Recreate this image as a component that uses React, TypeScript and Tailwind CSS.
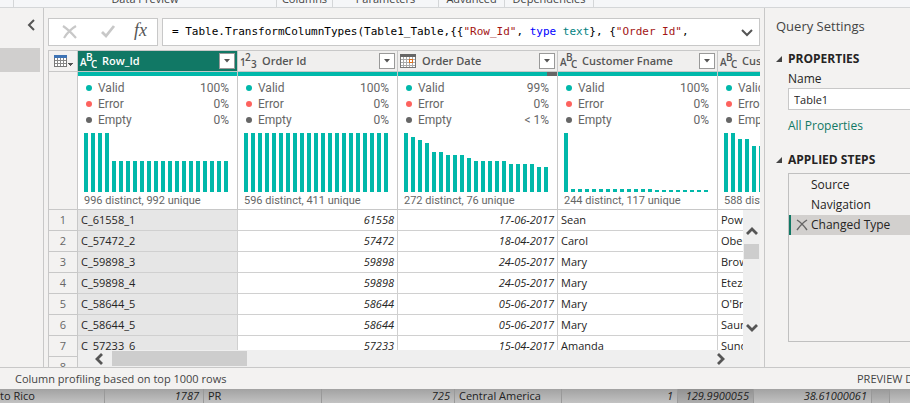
import React from "react";

type Kind = "text" | "number" | "date";

interface Column {
  name: string;
  kind: Kind;
  selected?: boolean;
  stats: [string, string, string];
  emptyTail?: boolean;
  bars: number[];
  summary: string;
  cells: string[];
}

const fill = (height: number, count: number): number[] => Array(count).fill(height);

const columns: Column[] = [
  {
    name: "Row_Id",
    kind: "text",
    selected: true,
    stats: ["100%", "0%", "0%"],
    bars: [...fill(59, 4), ...fill(31, 17)],
    summary: "996 distinct, 992 unique",
    cells: ["C_61558_1", "C_57472_2", "C_59898_3", "C_59898_4", "C_58644_5", "C_58644_5", "C_57233_6", ""],
  },
  {
    name: "Order Id",
    kind: "number",
    stats: ["100%", "0%", "0%"],
    bars: fill(59, 21),
    summary: "596 distinct, 411 unique",
    cells: ["61558", "57472", "59898", "59898", "58644", "58644", "57233", ""],
  },
  {
    name: "Order Date",
    kind: "date",
    stats: ["99%", "0%", "< 1%"],
    emptyTail: true,
    bars: [59, 55, 52, 49, 40, 40, 37, 37, 37, 34, ...fill(31, 5), ...fill(28, 4), 25, 25],
    summary: "272 distinct, 76 unique",
    cells: ["17-06-2017", "18-04-2017", "24-05-2017", "24-05-2017", "05-06-2017", "05-06-2017", "15-04-2017", ""],
  },
  {
    name: "Customer Fname",
    kind: "text",
    stats: ["100%", "0%", "0%"],
    bars: [59, ...fill(3, 12), ...fill(2, 8)],
    summary: "244 distinct, 117 unique",
    cells: ["Sean", "Carol", "Mary", "Mary", "Mary", "Mary", "Amanda", ""],
  },
  {
    name: "Customer",
    kind: "text",
    stats: ["100%", "0%", "0%"],
    bars: [59, 59, 53, 53, 46, 46, 40, 40, 37],
    summary: "588 distinct",
    cells: ["Powell", "Oberoi", "Brown", "Etezadi", "O'Brien", "Saunders", "Sundar", ""],
  },
];

const statKinds = [
  { label: "Valid", dot: "bg-[#01b8aa]" },
  { label: "Error", dot: "bg-[#fd625e]" },
  { label: "Empty", dot: "bg-[#666666]" },
];

function KindIcon({ kind }: { kind: Kind }) {
  if (kind === "date") {
    return (
      <svg width="18" height="16" viewBox="0 0 18 16" aria-hidden="true" className="shrink-0" shapeRendering="crispEdges">
        <rect x="1.5" y="1.5" width="15" height="13" fill="#fff" stroke="#777" />
        <rect x="1" y="1" width="16" height="3" fill="#666" />
        <path d="M4.5 4v10M7.5 4v10M10.5 4v10M13.5 4v10M2 6.5h14M2 9.5h14M2 12.5h14" stroke="#aaa" />
        <rect x="10.5" y="6.5" width="3" height="3" fill="#fff" stroke="#e0701a" />
      </svg>
    );
  }
  const [a, b, c] = kind === "text" ? ["A", "B", "C"] : ["1", "2", "3"];
  return (
    <svg
      width="18"
      height="20"
      viewBox="0 0 18 20"
      aria-hidden="true"
      className="shrink-0 font-['Open_Sans',sans-serif] text-[10px] font-semibold"
      fill="currentColor"
    >
      <text x={kind === "text" ? 1 : 1} y="15">{a}</text>
      <text x={kind === "text" ? 7 : 6} y="10">{b}</text>
      <text x={kind === "text" ? 12 : 12} y="17">{c}</text>
    </svg>
  );
}

function Chevron({ path, className }: { path: string; className?: string }) {
  return (
    <svg width="14" height="14" viewBox="0 0 14 14" fill="none" stroke="#555" strokeWidth="2.8" className={className} aria-hidden="true">
      <path d={path} />
    </svg>
  );
}

function ColumnHeader({ column }: { column: Column }) {
  return (
    <th
      scope="col"
      className={
        "h-[21px] border-r border-b border-[#c8c8c8] p-0 font-semibold " +
        (column.selected ? "bg-[#117865] text-white" : "bg-[#f0efee] text-[#555]")
      }
    >
      <div className="flex h-5 items-center pl-px pr-[2px]">
        <KindIcon kind={column.kind} />
        <span className="flex-1 pl-[5px] text-left whitespace-nowrap">{column.name}</span>
        <button
          type="button"
          aria-label={`Filter ${column.name}`}
          className="flex size-4 shrink-0 items-center justify-center border border-[#999] bg-white"
        >
          <svg width="6" height="4" viewBox="0 0 6 4" aria-hidden="true">
            <path d="M0 0h6L3 3.4z" fill="#555" />
          </svg>
        </button>
      </div>
    </th>
  );
}

function ColumnProfile({ column }: { column: Column }) {
  return (
    <td className="h-[138px] border-r border-b border-[#c8c8c8] bg-white p-0 align-top font-['Roboto',sans-serif] text-[#666]">
      <div className="flex h-1 bg-[#01b8aa]">
        {column.emptyTail && <div className="ml-auto w-[10px] bg-[#666]" />}
      </div>
      <div className="pt-1 pb-[5px] text-[12px] leading-4">
        {statKinds.map((stat, i) => (
          <div key={stat.label} className="flex items-center px-2">
            <span className={"mr-[6px] size-[6px] rounded-full " + stat.dot} />
            <span className="flex-1">{stat.label}</span>
            <span>{column.stats[i]}</span>
          </div>
        ))}
      </div>
      <div className="flex h-[59px] items-end gap-[3px] pl-[6px]">
        {column.bars.map((height, i) => (
          <div key={i} className="w-1 bg-[#01b8aa]" style={{ height }} />
        ))}
      </div>
      <div className="pt-px pl-[6px] text-[11px] leading-4 whitespace-nowrap">{column.summary}</div>
    </td>
  );
}

function DataGrid() {
  return (
    <div className="relative min-h-0 flex-1 overflow-hidden border-t border-l border-[#c8c8c8] bg-white">
      <table className="w-[829px] table-fixed border-separate border-spacing-0 text-[11px] leading-5 text-[#252423]">
        <colgroup>
          <col className="w-[29px]" />
          {columns.map((column) => (
            <col key={column.name} className="w-[160px]" />
          ))}
        </colgroup>
        <thead>
          <tr>
            <th className="h-[21px] border-r border-b border-[#c8c8c8] bg-[#f3f2f1] p-0">
              <button type="button" aria-label="Table options" className="flex h-5 items-center pl-[5px]">
                <svg width="20" height="14" viewBox="0 0 20 14" aria-hidden="true" shapeRendering="crispEdges">
                  <rect x="0.5" y="1.5" width="12" height="11" fill="#fff" stroke="#777" />
                  <rect x="0" y="1" width="13" height="3" fill="#3f74b5" />
                  <path d="M3.5 4v8M6.5 4v8M9.5 4v8M1 6.5h11M1 9.5h11" stroke="#888" />
                  <path d="M14 9h5l-2.5 3z" fill="#555" />
                </svg>
              </button>
            </th>
            {columns.map((column) => (
              <ColumnHeader key={column.name} column={column} />
            ))}
          </tr>
        </thead>
        <tbody>
          <tr>
            <td className="border-r border-b border-[#c8c8c8] bg-[#f3f2f1] p-0" />
            {columns.map((column) => (
              <ColumnProfile key={column.name} column={column} />
            ))}
          </tr>
          {columns[0].cells.map((_, row) => (
            <tr key={row}>
              <th scope="row" className="h-[21px] border-r border-b border-[#c8c8c8] bg-[#f3f2f1] p-0 text-center font-normal text-[#666]">
                {row + 1}
              </th>
              {columns.map((column) => (
                <td
                  key={column.name}
                  className={
                    "h-[21px] overflow-hidden border-r border-b border-[#d0d0d0] px-[3px] py-0 whitespace-nowrap " +
                    (column.selected ? "bg-[#e6e6e6] " : "bg-white ") +
                    (column.kind === "text" ? "text-left" : "text-right italic")
                  }
                >
                  {column.cells[row]}
                </td>
              ))}
            </tr>
          ))}
        </tbody>
      </table>

      <div className="absolute top-[159px] right-0 bottom-[17px] flex w-[17px] flex-col items-center bg-[#efefef] pt-[14px]">
        <Chevron path="M2 10l5-5 5 5" />
        <div className="mt-[6px] h-[15px] w-[15px] bg-[#cdcdcd]" />
        <Chevron path="M2 4l5 5 5-5" className="mt-auto mb-[15px]" />
      </div>
      <div className="absolute right-0 bottom-0 left-[29px] flex h-[17px] items-center bg-[#efefef] pr-8 pl-[14px]">
        <Chevron path="M10 2L5 7l5 5" />
        <div className="ml-[6px] h-[15px] w-[135px] bg-[#cdcdcd]" />
        <Chevron path="M4 2l5 5-5 5" className="ml-auto" />
      </div>
    </div>
  );
}

function FormulaBar() {
  return (
    <div className="flex h-7 shrink-0 gap-1">
      <div className="flex w-[110px] shrink-0 items-center border border-[#c8c8c8] bg-white text-[#c8c8c8]">
        <button type="button" aria-label="Cancel" className="ml-[13px]">
          <svg width="16" height="16" viewBox="0 0 16 16" fill="none" stroke="currentColor" strokeWidth="2.2" aria-hidden="true">
            <path d="M1 2q6 4 13 12M14 2Q7 6 2 14" />
          </svg>
        </button>
        <button type="button" aria-label="Apply" className="ml-[22px]">
          <svg width="16" height="16" viewBox="0 0 16 16" fill="none" stroke="currentColor" strokeWidth="2.8" aria-hidden="true">
            <path d="M2 8l4 4 8-10" />
          </svg>
        </button>
        <button
          type="button"
          aria-label="Insert function"
          className="ml-[18px] pb-1 font-['Liberation_Serif',serif] text-[18px] leading-5 text-[#555] italic"
        >
          fx
        </button>
      </div>
      <div className="flex min-w-0 flex-1 items-center border border-[#c8c8c8] bg-white pr-[5px] pl-[9px]">
        <div
          role="textbox"
          aria-label="Formula"
          contentEditable
          suppressContentEditableWarning
          spellCheck={false}
          className="flex-1 overflow-hidden font-['DejaVu_Sans_Mono',monospace] text-[11px] leading-4 whitespace-pre text-black"
        >
          {"= Table.TransformColumnTypes(Table1_Table,{{"}
          <span className="text-[#a31515]">"Row_Id"</span>
          {", "}
          <span className="text-[#0000ff]">type</span> <span className="text-[#007f7f]">text</span>
          {"}, {"}
          <span className="text-[#a31515]">"Order Id"</span>,
        </div>
        <button type="button" aria-label="Expand formula bar">
          <svg width="14" height="14" viewBox="0 0 14 14" fill="none" stroke="#555" strokeWidth="2" aria-hidden="true">
            <path d="M2 5l5 5 5-5" />
          </svg>
        </button>
      </div>
    </div>
  );
}

function SectionTitle({ children }: { children: React.ReactNode }) {
  return (
    <h3 className="flex h-5 items-center gap-[6px] text-[12px] font-bold whitespace-nowrap text-[#252423]">
      <svg width="6" height="6" viewBox="0 0 6 6" aria-hidden="true">
        <path d="M6 0v6H0z" fill="#444" />
      </svg>
      {children}
    </h3>
  );
}

function QuerySettings() {
  return (
    <aside className="flex w-[146px] shrink-0 flex-col overflow-hidden border-l border-[#c8c8c8] pt-2 pl-[11px] text-[12px] text-[#252423]">
      <h2 className="text-[13px] leading-5 whitespace-nowrap text-[#444]">Query Settings</h2>
      <div className="pt-[13px]">
        <SectionTitle>PROPERTIES</SectionTitle>
        <div className="flex flex-col pl-3">
          <label htmlFor="query-name" className="h-[19px] leading-5">
            Name
          </label>
          <input
            id="query-name"
            defaultValue="Table1"
            className="h-[22px] w-full border border-r-0 border-[#c8c8c8] bg-white px-[5px] text-[11px]"
          />
          <a href="#properties" className="mt-[6px] leading-5 text-[#117865]">
            All Properties
          </a>
        </div>
      </div>
      <div className="pt-[14px]">
        <SectionTitle>APPLIED STEPS</SectionTitle>
        <ul className="mt-[3px] ml-3 h-[169px] border border-r-0 border-[#c0c0c0] pt-px leading-5">
          <li className="pl-[22px]">Source</li>
          <li className="pl-[22px]">Navigation</li>
          <li className="flex items-center border-l-2 border-[#117865] bg-[#d2d0ce] pl-[5px]">
            <button type="button" aria-label="Delete step" className="mr-[3px]">
              <svg width="12" height="12" viewBox="0 0 12 12" fill="none" stroke="#666" strokeWidth="1.4" aria-hidden="true">
                <path d="M1 1q5 3 10 10M11 1Q6 4 1 11" />
              </svg>
            </button>
            <span className="whitespace-nowrap">Changed Type</span>
          </li>
        </ul>
      </div>
    </aside>
  );
}

function Ribbon() {
  const group = "flex shrink-0 items-end justify-center border-r border-[#d4d6d8]";
  return (
    <div className="flex h-2 shrink-0 overflow-hidden border-b border-[#d4d6d8] bg-[#f5f6f8] text-[11px] leading-4 text-[#444]">
      <div className={group + " w-[14px]"} />
      <div className={group + " w-[263px]"}>Data Preview</div>
      <div className={group + " w-14"}>Columns</div>
      <div className={group + " w-[106px]"}>Parameters</div>
      <div className={group + " w-[66px]"}>Advanced</div>
      <div className={group + " w-[89px]"}>Dependencies</div>
    </div>
  );
}

function BackgroundRow() {
  const cell = "h-[14px] border-r border-[#999] px-1 py-0 whitespace-nowrap overflow-hidden";
  return (
    <table className="w-full table-fixed border-separate border-spacing-0 bg-linear-to-b from-[#a2a2a2] to-[#c2c2c2] text-[11px] leading-[14px] text-[#222]">
      <colgroup>
        <col className="w-[105px]" />
        <col className="w-[99px]" />
        <col className="w-[118px]" />
        <col className="w-[133px]" />
        <col className="w-[107px]" />
        <col className="w-[116px]" />
        <col className="w-[76px]" />
        <col className="w-[118px]" />
        <col className="w-[18px]" />
        <col />
      </colgroup>
      <tbody>
        <tr>
          <td className="h-[14px] overflow-hidden border-r border-[#999] p-0 whitespace-nowrap">to Rico</td>
          <td className={cell + " text-right italic"}>1787</td>
          <td className={cell}>PR</td>
          <td className={cell + " text-right italic"}>725</td>
          <td className={cell}>Central America</td>
          <td className={cell + " text-right italic"}>1</td>
          <td className={cell + " bg-black/10 text-right italic"}>129.9900055</td>
          <td className={cell + " text-right italic"}>38.61000061</td>
          <td className={cell + " bg-black/5"} />
          <td className="p-0" />
        </tr>
      </tbody>
    </table>
  );
}

export default function App() {
  return (
    <div className="flex h-screen flex-col overflow-hidden bg-[#f3f2f1] font-['Open_Sans','Noto_Sans',sans-serif]">
      <Ribbon />
      <div className="flex min-h-0 flex-1">
        <nav aria-label="Queries" className="flex w-11 shrink-0 flex-col border-r border-[#c8c8c8]">
          <button type="button" aria-label="Collapse queries" className="mt-[10px] mr-[5px] self-end">
            <svg width="14" height="14" viewBox="0 0 14 14" fill="none" stroke="#555" strokeWidth="2" aria-hidden="true">
              <path d="M10 2L5 7l5 5" />
            </svg>
          </button>
          <div className="mt-4 mr-[3px] h-6 bg-[#d0cfce]" />
        </nav>
        <main className="flex min-w-0 flex-1 flex-col gap-1 px-1 pt-[10px]">
          <FormulaBar />
          <DataGrid />
        </main>
        <QuerySettings />
      </div>
      <footer className="flex h-[22px] shrink-0 items-center justify-between border-t border-[#c8c8c8] pt-px pl-[15px] text-[11px] whitespace-nowrap text-[#444]">
        <span>Column profiling based on top 1000 rows</span>
        <span className="w-[53px] overflow-hidden">PREVIEW D</span>
      </footer>
      <BackgroundRow />
    </div>
  );
}
